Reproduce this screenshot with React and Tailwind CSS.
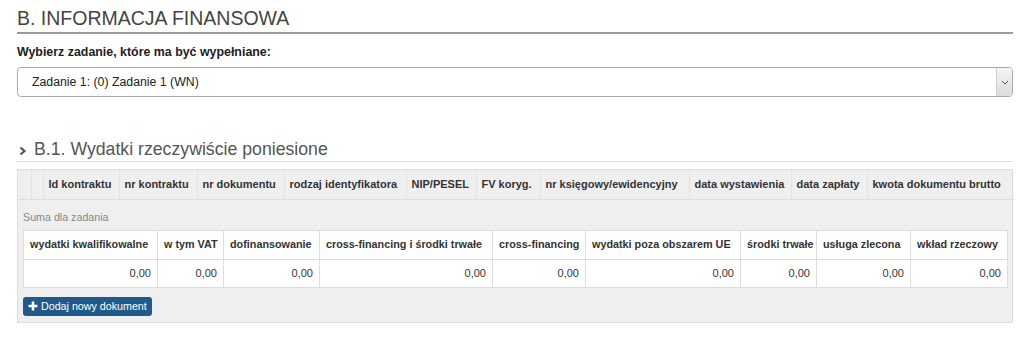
import React from "react";

const docCols = [
  ["", 13],
  ["", 12],
  ["Id kontraktu", 76],
  ["nr kontraktu", 78],
  ["nr dokumentu", 87],
  ["rodzaj identyfikatora", 122],
  ["NIP/PESEL", 70],
  ["FV koryg.", 64],
  ["nr księgowy/ewidencyjny", 149],
  ["data wystawienia", 102],
  ["data zapłaty", 76],
  ["kwota dokumentu brutto", 147],
];

const sumCols = [
  ["wydatki kwalifikowalne", 134],
  ["w tym VAT", 66],
  ["dofinansowanie", 96],
  ["cross-financing i środki trwałe", 173],
  ["cross-financing", 93],
  ["wydatki poza obszarem UE", 155],
  ["środki trwałe", 76],
  ["usługa zlecona", 94],
  ["wkład rzeczowy", 97],
];

const App = () => {
  return (
    <div
      className="bg-white text-[#333] pl-[17px] pr-[10px] pt-[6px] pb-4"
      style={{ fontFamily: '"Liberation Sans", Arial, sans-serif' }}
    >
      {/* Section heading */}
      <h1 className="text-[19.5px] leading-[24px] text-[#444] border-b-2 border-[#9a9a9a] pb-[2px]">
        B. INFORMACJA FINANSOWA
      </h1>

      <label className="block mt-[10px] text-[12.4px] leading-[16px] font-bold text-[#222]">
        Wybierz zadanie, które ma być wypełniane:
      </label>

      {/* Task select */}
      <div className="mt-[7px] h-[30px] flex items-stretch border border-[#aaa] rounded-[4px] bg-white">
        <div className="flex-1 flex items-center pl-[14px] text-[12.3px] text-[#222]">
          Zadanie 1: (0) Zadanie 1 (WN)
        </div>
        <div className="w-[16px] flex items-center justify-center bg-gradient-to-b from-[#f4f4f4] to-[#dcdcdc] border-l border-[#ccc] rounded-r-[3px]">
          <svg width="8" height="5" viewBox="0 0 8 5">
            <path d="M1 1l3 3 3-3" fill="none" stroke="#555" strokeWidth="1" />
          </svg>
        </div>
      </div>

      {/* B.1 heading */}
      <h2 className="mt-[41px] flex items-end text-[17.7px] leading-[22px] text-[#555] border-b border-[#ddd] pb-[1px]">
        <svg width="12" height="12" viewBox="0 0 12 12" className="mr-[5px] mb-[3px]">
          <path d="M3.5 2.5l4 3.5-4 3.5" fill="none" stroke="#555" strokeWidth="2.2" />
        </svg>
        B.1. Wydatki rzeczywiście poniesione
      </h2>

      {/* Documents panel */}
      <div className="mt-[7px] border border-[#ddd] bg-[#efefef]">
        <table className="w-full border-collapse table-fixed">
          <colgroup>
            {docCols.map(([, w], i) => (
              <col key={i} style={{ width: w }} />
            ))}
          </colgroup>
          <thead>
            <tr className="h-[29px] border-b border-[#ddd]">
              {docCols.map(([t], i) => (
                <th
                  key={i}
                  className={`text-left text-[11px] font-bold px-[5px] whitespace-nowrap text-[#333] ${
                    i < docCols.length - 1 ? "border-r border-[#e2e2e2]" : ""
                  }`}
                >
                  {t}
                </th>
              ))}
            </tr>
          </thead>
        </table>

        <div className="px-[5px]">
          <div className="pt-[10px] pb-[6px] text-[10.7px] leading-[14px] text-[#888]">
            Suma dla zadania
          </div>
          <table className="w-full border-collapse table-fixed bg-white">
            <colgroup>
              {sumCols.map(([, w], i) => (
                <col key={i} style={{ width: w }} />
              ))}
            </colgroup>
            <thead>
              <tr className="h-[29px]">
                {sumCols.map(([t], i) => (
                  <th
                    key={i}
                    className="text-left text-[10.8px] font-bold px-[6px] whitespace-nowrap border border-[#ddd] text-[#333]"
                  >
                    {t}
                  </th>
                ))}
              </tr>
            </thead>
            <tbody>
              <tr className="h-[28px]">
                {sumCols.map((_, i) => (
                  <td
                    key={i}
                    className="text-right text-[11px] px-[6px] border border-[#ddd] text-[#333]"
                  >
                    0,00
                  </td>
                ))}
              </tr>
            </tbody>
          </table>
        </div>

        <div className="px-[5px] pt-[9px] pb-[6px]">
          <button className="h-[19px] flex items-center gap-[3px] px-[5px] rounded-[3px] bg-[#1f5a8b] text-white text-[10.7px] leading-none">
            <svg width="10" height="10" viewBox="0 0 10 10">
              <path d="M5 0.5v9M0.5 5h9" stroke="#fff" strokeWidth="2.6" />
            </svg>
            Dodaj nowy dokument
          </button>
        </div>
      </div>
    </div>
  );
};

export default App;
